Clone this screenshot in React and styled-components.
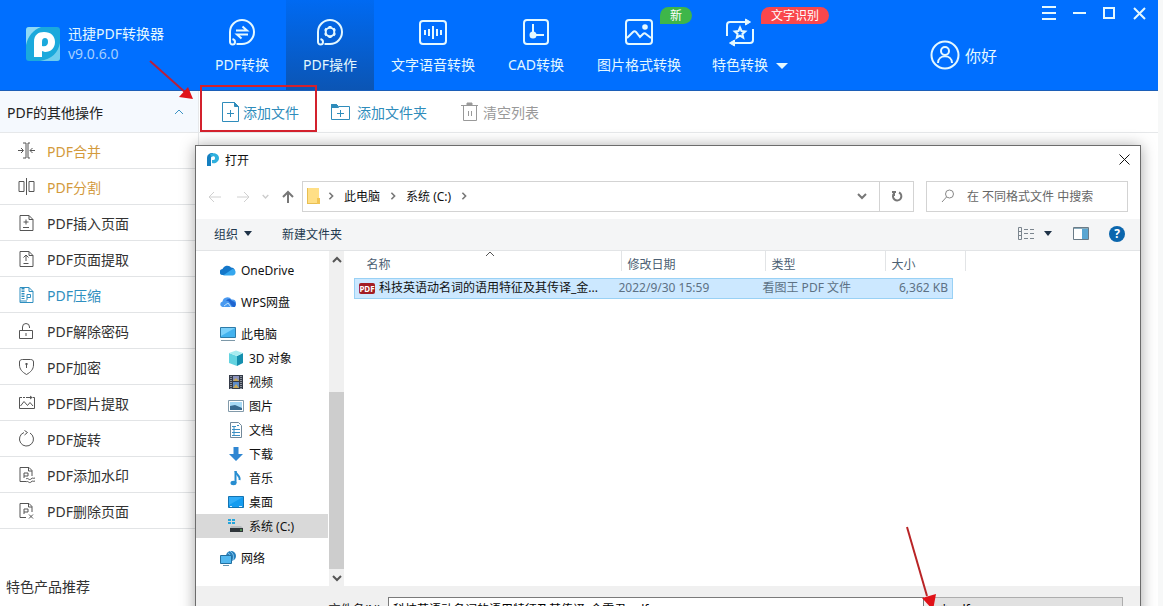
import React, {useState} from 'react';
import styled, {createGlobalStyle} from 'styled-components';

const Tabs = [
    {name: 'PDF转换', icon: 'convert'},
    {name: 'PDF操作', icon: 'operate'},
    {name: '文字语音转换', icon: 'voice', wide: true},
    {name: 'CAD转换', icon: 'cad'},
    {name: '图片格式转换', icon: 'image', wide: true, badge: '新', badgeColor: '#3eb649'},
    {name: '特色转换', icon: 'star', more: true, badge: '文字识别', badgeColor: '#f9474c'},
];

const Menus = [
    {name: 'PDF合并', icon: 'merge', color: '#d39a3c'},
    {name: 'PDF分割', icon: 'split', color: '#d39a3c'},
    {name: 'PDF插入页面', icon: 'insert'},
    {name: 'PDF页面提取', icon: 'extract'},
    {name: 'PDF压缩', icon: 'zip', color: '#2f8fc0'},
    {name: 'PDF解除密码', icon: 'unlock'},
    {name: 'PDF加密', icon: 'shield'},
    {name: 'PDF图片提取', icon: 'picture'},
    {name: 'PDF旋转', icon: 'rotate'},
    {name: 'PDF添加水印', icon: 'watermark'},
    {name: 'PDF删除页面', icon: 'remove'},
];

const Tree = [
    {name: 'OneDrive', icon: 'onedrive', top: true},
    {name: 'WPS网盘', icon: 'wps', top: true},
    {name: '此电脑', icon: 'computer', top: true},
    {name: '3D 对象', icon: 'cube'},
    {name: '视频', icon: 'video'},
    {name: '图片', icon: 'photo'},
    {name: '文档', icon: 'doc'},
    {name: '下载', icon: 'download'},
    {name: '音乐', icon: 'music'},
    {name: '桌面', icon: 'desktop'},
    {name: '系统 (C:)', icon: 'drive'},
    {name: '网络', icon: 'network', top: true},
];

const Bubble = <>
    <path d="M2 24V14A12 12 0 1 1 14 26H8.500"/>
    <path d="M2 14v10a2.500 2.500 0 1 0 5 0c0-1.500-1-2.500-2.500-3"/>
</>;

const tabIcons = {
    convert: <>
        {Bubble}
        <path d="M8 12.500h11l-4.500-4M20 16.500H9l4.500 4"/>
    </>,
    operate: <>
        {Bubble}
        <circle cx="14" cy="14" r="4.300"/>
        <path strokeWidth="3" d="M14 8v2M14 18v2M8.800 11l1.700 1M17.500 16l1.700 1M19.200 11l-1.700 1M10.500 16l-1.700 1"/>
    </>,
    voice: <>
        <rect x="1" y="3" width="26" height="23" rx="3"/>
        <path d="M6 12v5M10 11v7M14 8v13M18 11v7M22 12v5"/>
    </>,
    cad: <>
        <rect x="2" y="2" width="24" height="24" rx="3"/>
        <path d="M11 6v12M8 17h14"/>
        <circle cx="11" cy="17" r="2.500" fill="currentColor"/>
    </>,
    image: <>
        <rect x="1" y="2" width="26" height="24" rx="3"/>
        <circle cx="20" cy="9" r="1.800" fill="currentColor"/>
        <path d="M2 20l6-6c1-1 2-1 3 0l4 5 3-3c1-1 2-1 3 0l5 4"/>
    </>,
    star: <>
        <path d="M1 18V7a3 3 0 0 1 3-3h17M27 11v11a3 3 0 0 1-3 3H7"/>
        <path d="M19.500 1l5 3-5 3zM8.500 22l-5 3 5 3z" fill="currentColor" strokeWidth="1"/>
        <path d="M14 9.500l1.500 3.500 3.700.4-2.800 2.500.8 3.700-3.200-2-3.200 2 .8-3.700-2.800-2.500 3.700-.4z"/>
    </>,
};

const Page = <path d="M2 1.500h9l4 4v11H2zM11 1.500v4h4"/>;

const menuIcons = {
    merge: <path d="M5 1h3v15H5M12 1h-2M12 16h-2M10 1v15M0 8.500h5M3 6l2.500 2.500L3 11M17 8.500h-5M14.500 6L12 8.500l2.500 2.500"/>,
    split: <path d="M1 3.500h5v10H1zM11 3.500h5v10h-5zM8.500 0v17"/>,
    insert: <>{Page}<path d="M8 5.500v5M5.500 8h5M5 13.500h6"/></>,
    extract: <>{Page}<path d="M8 11V5M5.500 7.500L8 5l2.500 2.500M5.500 13.500h5"/></>,
    zip: <>{Page}<path d="M5 2v11" strokeWidth="3" strokeDasharray="1.500 1"/><path d="M9 14V8.500h3.500v3H9M2 15h7"/></>,
    unlock: <path d="M1.500 8.500h13v8h-13zM4.500 8.500V5a3.500 3.500 0 0 1 7 0v1M8 11v3"/>,
    shield: <><path d="M8.500 16.500C4 14 1.500 11 1.500 7V4c0-1.500 1-2.500 3-2.500h8c2 0 3 1 3 2.500v3c0 4-2.500 7-7 9.500z"/><path strokeWidth="2" d="M8.500 5v2"/><path d="M8.500 6v4"/></>,
    picture: <path d="M4 3.500H1.500v11h15v-11h-2M5 3.500h2M8 3.500h6M12 2l2 1.500L12 5M2.500 12L6 7.500l3.500 4L12 8.500l3 3.500"/>,
    rotate: <path d="M6 2.500a7 7 0 1 0 6 .5M6.500.5l3 2-3 2.500"/>,
    watermark: <path d="M8 15.500H2V1.500h9l3 3V10M10.500 1.500V5H14M6 12V7h4v3H6M8 13c2-2 3 2 5 0s2 0 4-1M8 16c2-2 3 2 5 0s2 0 4-1"/>,
    remove: <path d="M8 15.500H2V1.500h9l3 3V10M10.500 1.500V5H14M6 12V7h4v3H6M11 12.500l4 4M15 12.500l-4 4"/>,
};

const treeIcons = {
    onedrive: <>
        <path d="M3 13a3 3 0 0 1-.5-6A5 5 0 0 1 11 5.500 4 4 0 0 1 13 13z" fill="#1477c9"/>
        <path d="M3 13.500L12.500 7a3.300 3.300 0 0 1 .5 6.500z" fill="#35a7ee"/>
    </>,
    wps: <>
        <path d="M2.500 13a2.800 2.800 0 0 1 0-5.500A5 5 0 0 1 11.500 5.500 3.500 3.500 0 0 1 13 13z" fill="#4a9af0"/>
        <path d="M6 7c4-1 4 4 7 6h2c2-4-1-6-3-6-2-3-5-2-6 0z" fill="#1f64cf"/>
        <path d="M4 12l4-3 3 4" stroke="#bfe2ff" fill="none"/>
    </>,
    computer: <>
        <path d="M.5 1.500h15v10H.5z" fill="#43b2ee" stroke="#2e7ba8"/>
        <path d="M1 2h14L1 10z" fill="#7bd0fa"/>
        <path d="M1 14.500h14" stroke="#7d98a8"/>
    </>,
    cube: <>
        <path d="M1 3l8 3v10l-8-3z" fill="#62d3e0"/>
        <path d="M9 6l6-3v10l-6 3z" fill="#158fae"/>
        <path d="M1 3l7-2.500L15 3 9 6z" fill="#a8ecf0"/>
    </>,
    video: <>
        <path d="M1 1h14v14H1z" fill="#353b48"/>
        <path d="M3 2v13M13 2v13" stroke="#e7eef4" strokeDasharray="1 1"/>
        <path d="M5 2h6v5H5z" fill="#8b93bd"/><path d="M5 8h6v6H5z" fill="#5e8cc9"/>
        <path d="M5 14l3-4 3 4M5 7l3-3 3 3" fill="#c9aa57"/>
    </>,
    photo: <>
        <path d="M.5 2.500h15v11H.5z" fill="#fff" stroke="#829aaa"/>
        <path d="M2 4h12v8H2z" fill="#a6d9f5"/><path d="M2 8l5-1 7 3v2H2z" fill="#376a90"/>
    </>,
    doc: <>
        <path d="M2.500.5h8l3 3v12h-11z" fill="#fff" stroke="#71889a"/>
        <path d="M4 4.500h4M4 7.500h8M4 10.500h8M4 13.500h8M9 3.500h2M6 5v8" stroke="#3b8fc4"/>
    </>,
    download: <path d="M5.500 1h5v7H15l-7 7-7-7h4.500z" fill="#2f86d2"/>,
    music: <><path d="M7.500 1c0 4 5 4 4 9" fill="none" stroke="#278dd0" strokeWidth="2"/><path d="M7.500 1v12" stroke="#278dd0" strokeWidth="2"/><ellipse cx="5.500" cy="13" rx="3" ry="2.200" fill="#278dd0"/></>,
    desktop: <><path d="M.5 2.500h15v11H.5z" fill="#149cf0" stroke="#1473b1"/><path d="M1 3h14L1 11z" fill="#31adf8"/><path d="M2 12.500h2M11 12.500h3" stroke="#d8efff"/></>,
    drive: <>
        <path d="M0 1h3v2H0zM4 1h3v2H4zM0 4h3v2H0zM4 4h3v2H4z" fill="#23a5dd"/>
        <path d="M3 8h10l2 2H2z" fill="#b7bcc0"/><path d="M2 10h13v4H2z" fill="#30363b"/><path d="M12 12h2" stroke="#73e16f"/>
    </>,
    network: <>
        <circle cx="11" cy="6" r="5" fill="#2680bd"/><path d="M8 3c3 2 4 4 3 8M10 1c4 3 4 6 3 9" stroke="#92cdf0" fill="none"/>
        <path d="M.5 5.500h11v8H.5z" fill="#52b8f0" stroke="#2470a0"/><path d="M3 15.500h6" stroke="#6795b0"/>
    </>,
};

const Chevron = ({dir, size = 10, color = '#555', width = 2}) => {
    const d = {
        up: 'M1 7l4-4 4 4',
        down: 'M1 3l4 4 4-4',
        right: 'M3 1l4 4-4 4',
    };
    return <Glyph width={size} height={size} viewBox="0 0 10 10" stroke={color} strokeWidth={width}><path d={d[dir]}/></Glyph>
};

const TileLogo = () => (
    <Glyph width="34" height="34" viewBox="0 0 34 34" strokeWidth="0">
        <rect width="34" height="34" rx="3" fill="#1ba9dc"/>
        <path d="M0 3a3 3 0 0 1 3-3h12C7 3 2 9 0 18z" fill="#8fd9f5"/>
        <path d="M34 16v15a3 3 0 0 1-3 3H14c12-2 18-8 20-18z" fill="#70cdee"/>
        <path fillRule="evenodd" d="M8 15C8 8 12 5 18 5c7 0 11 4 11 10s-4 10-10 10l-3-1v6H8zM16 19c4 1 6-1 6-4s-1-4-3-4-3 1-3 4z" fill="#fff"/>
    </Glyph>
);

const SmallLogo = () => (
    <Glyph width="12" height="14" viewBox="0 0 12 14" strokeWidth="0">
        <path d="M0 5c0-3 2-5 6-5v3C4 3 4 4 4 6v7H0z" fill="#157fc0"/>
        <path d="M3 1c4-2 9 0 9 4s-4 6-7 5V7c2 0 3 0 3-2S6 3 4 4z" fill="#2fb0de"/>
    </Glyph>
);

export const PdfConverter = () => {
    const [tab, setTab] = useState(1);
    const [folder, setFolder] = useState(10);
    const [fileName, setFileName] = useState('科技英语动名词的语用特征及其传译_金雯君.pdf');

    return <>
        <GlobalStyle/>
        <Screen>
            <AppWindow>
                <Header>
                    <Brand>
                        <TileLogo/>
                        <div>
                            <BrandName>迅捷PDF转换器</BrandName>
                            <Version>v9.0.6.0</Version>
                        </div>
                    </Brand>
                    <Nav>
                        {Tabs.map((item, idx) => (
                            <Tab key={item.name} $active={tab === idx} $wide={item.wide} onClick={() => setTab(idx)}>
                                <Glyph width="30" height="30" viewBox="-1 -1 30 30" strokeWidth="2">{tabIcons[item.icon]}</Glyph>
                                <span>{item.name}</span>
                                {item.more && <MoreArrow/>}
                                {item.badge && <Badge $color={item.badgeColor}>{item.badge}</Badge>}
                            </Tab>
                        ))}
                    </Nav>
                    <User>
                        <Glyph width="30" height="30" viewBox="0 0 30 30" strokeWidth="2">
                            <circle cx="15" cy="15" r="13.500"/>
                            <circle cx="15" cy="11" r="4"/>
                            <path d="M8 23c0-9 14-9 14 0"/>
                        </Glyph>
                        你好
                    </User>
                    <Controls>
                        <button aria-label="菜单"><Glyph width="14" height="14" viewBox="0 0 14 14" strokeWidth="2"><path d="M0 1h14M0 7h14M0 13h14"/></Glyph></button>
                        <button aria-label="最小化"><Glyph width="14" height="14" viewBox="0 0 14 14" strokeWidth="2"><path d="M1 7h13"/></Glyph></button>
                        <button aria-label="最大化"><Glyph width="14" height="14" viewBox="0 0 14 14" strokeWidth="2"><path d="M2 2h10v10H2z"/></Glyph></button>
                        <button aria-label="关闭"><Glyph width="14" height="14" viewBox="0 0 14 14" strokeWidth="2"><path d="M2 2l11 11M13 2L2 13"/></Glyph></button>
                    </Controls>
                </Header>
                <Main>
                    <Sidebar>
                        <SideTitle>PDF的其他操作<Chevron dir="up" color="#3c93c4" width={1}/></SideTitle>
                        {Menus.map(item => (
                            <MenuItem key={item.name} $color={item.color}>
                                <MenuIcon width="18" height="18" viewBox="0 0 18 18" $blue={item.icon === 'zip'}>{menuIcons[item.icon]}</MenuIcon>
                                {item.name}
                            </MenuItem>
                        ))}
                        <SideFoot>特色产品推荐</SideFoot>
                    </Sidebar>
                    <Work>
                        <ToolBar>
                            <Tool>
                                <Glyph width="18" height="22" viewBox="0 0 18 22" strokeWidth="1">
                                    <path d="M.5 1.500h12l4 4v15H.5zM5 12.500h7M8.500 9v7"/><path d="M12.500 1.500v4h4z" fill="currentColor"/>
                                </Glyph>
                                添加文件
                            </Tool>
                            <Tool $left={32} $gap={7}>
                                <Glyph width="19" height="18" viewBox="0 0 19 18" strokeWidth="1">
                                    <path d="M.5 1.500h5l2 2h11v13H.5zM6 10.500h7M9.500 7v7"/><path d="M.5 1.500h5l2 3h-7z" fill="currentColor"/>
                                </Glyph>
                                添加文件夹
                            </Tool>
                            <Tool $left={34} $gap={5} $gray>
                                <Glyph width="17" height="20" viewBox="0 0 17 20" strokeWidth="1">
                                    <path d="M0 3.500h17M2.500 4v14.500h13V4M7.500 9v5M10.500 9v5"/><path d="M6 1h5v2H6z" fill="currentColor"/>
                                </Glyph>
                                清空列表
                            </Tool>
                        </ToolBar>
                    </Work>
                </Main>
            </AppWindow>

            <Dialog role="dialog" aria-label="打开">
                <TitleBar>
                    <SmallLogo/>
                    <span>打开</span>
                    <CloseBtn aria-label="关闭对话框"><Glyph width="11" height="11" viewBox="0 0 11 11" strokeWidth="1"><path d="M.5.5l10 10M10.500.5l-10 10"/></Glyph></CloseBtn>
                </TitleBar>
                <PathRow>
                    <Arrows>
                        <button aria-label="后退"><Glyph width="14" height="14" viewBox="0 0 14 14" stroke="#d0d0d0" strokeWidth="1"><path d="M13 7H1M6 2L1 7l5 5"/></Glyph></button>
                        <button aria-label="前进"><Glyph width="14" height="14" viewBox="0 0 14 14" stroke="#d0d0d0" strokeWidth="1"><path d="M1 7h12M8 2l5 5-5 5"/></Glyph></button>
                        <button aria-label="最近位置"><Chevron dir="down" size={7} color="#ccc"/></button>
                        <button aria-label="上移"><Glyph width="14" height="14" viewBox="0 0 14 14" stroke="#777" strokeWidth="2"><path d="M7 13V2M2 7l5-5 5 5"/></Glyph></button>
                    </Arrows>
                    <Address>
                        <Glyph width="14" height="16" viewBox="0 0 14 16" strokeWidth="0">
                            <path d="M0 0h12v16H0z" fill="#ffdf86"/><path d="M0 0h1v16H0zM0 15h12v1H0z" fill="#e8bf52"/><path d="M10 10h3v6h-3z" fill="#f2c555"/>
                        </Glyph>
                        <Chevron dir="right" size={8} color="#777"/>
                        <button>此电脑</button>
                        <Chevron dir="right" size={8} color="#777"/>
                        <button>系统 (C:)</button>
                        <Chevron dir="right" size={8} color="#777"/>
                        <DropBtn aria-label="历史记录"><Chevron dir="down" color="#777"/></DropBtn>
                        <RefreshBtn aria-label="刷新">
                            <Glyph width="12" height="12" viewBox="0 0 12 12" stroke="#777" strokeWidth="2"><path d="M8 2.500A4.200 4.200 0 1 1 3 3.500M3 6V2M1 2h4"/></Glyph>
                        </RefreshBtn>
                    </Address>
                    <Search>
                        <Glyph width="14" height="14" viewBox="0 0 14 14" stroke="#888" strokeWidth="1"><circle cx="8.500" cy="5" r="4"/><path d="M5.500 8L1 13"/></Glyph>
                        <input type="text" aria-label="搜索" placeholder="在 不同格式文件 中搜索"/>
                    </Search>
                </PathRow>
                <Commands>
                    <button>组织<Caret/></button>
                    <button>新建文件夹</button>
                    <ViewBtns>
                        <button aria-label="更改视图">
                            <Glyph width="17" height="14" viewBox="0 0 17 14" stroke="#7b858e" strokeWidth="1"><path d="M.5.5h3v12h-3zM.5 4.500h3M.5 8.500h3M6 2.500h4M12 2.500h4M6 6.500h4M12 6.500h4M6 11.500h4M12 11.500h4"/></Glyph>
                            <Caret/>
                        </button>
                        <button aria-label="预览窗格">
                            <Glyph width="16" height="13" viewBox="0 0 16 13" strokeWidth="1"><path d="M.5.5h15v12H.5z" fill="#fff" stroke="#6a7b87"/><path d="M9 1h6v11H9z" fill="#5aa6d2" stroke="none"/><path d="M1 1.500h14" stroke="#8ab"/></Glyph>
                        </button>
                        <HelpBtn aria-label="帮助">?</HelpBtn>
                    </ViewBtns>
                </Commands>
                <Body>
                    <TreePane>
                        {Tree.map((item, idx) => (
                            <TreeItem key={item.name} $top={item.top} $selected={folder === idx} onClick={() => setFolder(idx)}>
                                <Glyph width="16" height="16" viewBox="0 0 16 16" stroke="none">{treeIcons[item.icon]}</Glyph>
                                {item.name}
                            </TreeItem>
                        ))}
                    </TreePane>
                    <ScrollBar>
                        <Chevron dir="up"/>
                        <Thumb/>
                        <Chevron dir="down"/>
                    </ScrollBar>
                    <Files>
                        <SortMark><Chevron dir="up" width={1}/></SortMark>
                        <FileTable>
                            <colgroup><col width="262"/><col width="144"/><col width="120"/><col width="72"/><col width="13"/></colgroup>
                            <thead>
                                <tr>
                                    <th>名称</th>
                                    <th>修改日期</th>
                                    <th>类型</th>
                                    <th>大小</th>
                                    <th aria-label="空列"/>
                                </tr>
                            </thead>
                            <tbody>
                                <tr>
                                    <NameCell>
                                        <div>
                                            <PdfTag>PDF</PdfTag>
                                            科技英语动名词的语用特征及其传译_金...
                                        </div>
                                    </NameCell>
                                    <td>2022/9/30 15:59</td>
                                    <td>看图王 PDF 文件</td>
                                    <SizeCell>6,362 KB</SizeCell>
                                </tr>
                            </tbody>
                        </FileTable>
                    </Files>
                </Body>
                <Footer>
                    <label htmlFor="fileName">文件名(N):</label>
                    <input id="fileName" type="text" value={fileName} onChange={e => setFileName(e.target.value)}/>
                    <select aria-label="文件类型">
                        <option>*.pdf</option>
                    </select>
                </Footer>
            </Dialog>

            <Highlight/>
            <FirstArrow width="48" height="44" viewBox="0 0 48 44">
                <path d="M1 1l36 32" stroke="#b81f3c" strokeWidth="2"/>
                <path d="M44 39l-14-2 9-10z" fill="#e01218"/>
            </FirstArrow>
            <SecondArrow width="36" height="84" viewBox="0 0 36 84">
                <path d="M2 1l20 69" stroke="#b92426" strokeWidth="2"/>
                <path d="M28 84L17 72l14-4z" fill="#e01218"/>
            </SecondArrow>
        </Screen>
    </>
}

export default PdfConverter;

const GlobalStyle = createGlobalStyle`
    *{
        box-sizing: border-box;
    }
    body{
        margin: 0;
        font-family: "Noto Sans", "Noto Sans CJK SC", sans-serif;
        font-size: 14px;
        color: #222;
    }
    button{
        border: none;
        background: none;
        padding: 0;
        font: inherit;
        color: inherit;
        white-space: nowrap;
    }
`

const Glyph = styled.svg.attrs(props => ({
    fill: 'none',
    stroke: props.stroke || 'currentColor',
    'aria-hidden': true,
}))`
    flex: none;
    display: block;
`

const Screen = styled.div`
    position: relative;
    height: 100vh;
    overflow: hidden;
    background: #f7f8f8;
`

const AppWindow = styled.div`
    display: flex;
    flex-direction: column;
    height: 100%;
    margin-right: 5px;
    background: #fff;
`

const Header = styled.header`
    display: flex;
    height: 91px;
    background: #006fff;
    border-bottom: 1px solid #1c5fb8;
    color: #e4f8ff;
`

const Brand = styled.div`
    display: flex;
    align-items: flex-start;
    gap: 8px;
    width: 198px;
    padding: 27px 0 0 26px;
`

const BrandName = styled.div`
    line-height: 20px;
    margin-top: -3px;
`

const Version = styled.div`
    line-height: 20px;
    color: #a5d0ff;
`

const Nav = styled.nav`
    display: flex;
`

const Tab = styled.button`
    position: relative;
    display: flex;
    flex-direction: column;
    align-items: center;
    gap: 8px;
    width: ${props => props.$wide ? 118 : 88}px;
    padding-top: 17px;
    line-height: 20px;
    background: ${props => props.$active ? 'linear-gradient(#006af2, #0b55b4)' : 'none'};

    &:last-child{
        width: 84px;
    }
`

const MoreArrow = styled.i`
    position: absolute;
    left: 78px;
    top: 63px;
    border: 6px solid transparent;
    border-top-color: currentColor;
    border-bottom: none;
`

const Badge = styled.span`
    position: absolute;
    left: ${props => props.children.length > 1 ? 63 : 80}px;
    top: 7px;
    padding: 0 10px;
    border-radius: 9px 9px 9px 0;
    font-size: 12px;
    line-height: 17px;
    color: #fff;
    background: ${props => props.$color};
`

const User = styled.div`
    display: flex;
    align-items: center;
    gap: 5px;
    height: 28px;
    margin: 41px 45px 0 auto;
    font-size: 16px;
`

const Controls = styled.div`
    display: flex;
    align-items: flex-start;
    gap: 16px;
    padding: 6px 12px 0 0;
`

const Main = styled.div`
    display: flex;
    flex: 1;
`

const Sidebar = styled.aside`
    display: flex;
    flex-direction: column;
    width: 199px;
    border-right: 1px solid #e6e8ea;
`

const SideTitle = styled.h2`
    display: flex;
    align-items: center;
    justify-content: space-between;
    height: 42px;
    margin: 0;
    padding: 0 14px 0 7px;
    border-bottom: 1px solid #e6e8ea;
    font-size: 14px;
    font-weight: 400;
    background: #f5f9fe;
`

const MenuItem = styled.button`
    display: flex;
    align-items: center;
    gap: 11px;
    height: 36px;
    padding-left: 18px;
    border-bottom: 1px solid #e2e4e6;
    color: ${props => props.$color || '#333'};
`

const MenuIcon = styled.svg`
    fill: none;
    stroke: ${props => props.$blue ? '#2f8fc0' : '#555'};
    stroke-width: 1;
`

const SideFoot = styled.div`
    margin-top: 48px;
    padding-left: 6px;
    line-height: 20px;
    color: #333;
`

const Work = styled.main`
    flex: 1;
`

const ToolBar = styled.div`
    display: flex;
    align-items: center;
    height: 42px;
    padding-left: 23px;
    border-bottom: 1px solid #e6e8ea;
`

const Tool = styled.button`
    display: flex;
    align-items: center;
    gap: ${props => props.$gap || 3}px;
    margin-left: ${props => props.$left || 0}px;
    color: ${props => props.$gray ? '#999' : '#2f8cbb'};
`

const Dialog = styled.section`
    position: absolute;
    top: 145px;
    left: 195px;
    right: 22px;
    border: 1px solid #6c6c6c;
    font-size: 12px;
    color: #111;
    background: #fff;
    box-shadow: 0 1px 14px rgba(0, 0, 0, 0.35);
`

const TitleBar = styled.div`
    display: flex;
    align-items: center;
    gap: 6px;
    height: 29px;
    padding: 0 10px 2px 11px;
`

const CloseBtn = styled.button`
    margin-left: auto;
`

const PathRow = styled.div`
    display: flex;
    align-items: center;
    height: 44px;
    padding: 0 12px 1px;
`

const Arrows = styled.div`
    display: flex;
    align-items: center;
    gap: 12px;
    width: 94px;

    button:nth-child(2){
        margin-left: 2px;
    }
`

const Address = styled.div`
    display: flex;
    align-items: center;
    flex: 1;
    gap: 9px;
    height: 31px;
    padding: 0 0 1px 4px;
    border: 1px solid #d3d3d3;

    svg:first-child{
        margin-right: -3px;
    }
    button svg:first-child{
        margin: 0;
    }
`

const DropBtn = styled.button`
    margin: 0 3px 0 auto;
`

const RefreshBtn = styled.button`
    display: flex;
    align-items: center;
    justify-content: center;
    width: 34px;
    height: 29px;
    border-left: 1px solid #d3d3d3;
`

const Search = styled.div`
    display: flex;
    align-items: center;
    gap: 12px;
    width: 202px;
    height: 31px;
    margin-left: 12px;
    padding: 0 0 1px 14px;
    border: 1px solid #d3d3d3;

    input{
        flex: 1;
        min-width: 0;
        border: none;
        padding: 0;
        font: inherit;
    }
    input::placeholder{
        color: #666;
        opacity: 1;
    }
`

const Commands = styled.div`
    display: flex;
    align-items: center;
    gap: 30px;
    height: 32px;
    padding: 0 15px 2px 18px;
    border-bottom: 1px solid #e2e4e6;
    color: #22394f;
    background: #f4f5f6;

    button{
        display: flex;
        align-items: center;
        gap: 6px;
    }
`

const Caret = styled.i`
    border: 4px solid transparent;
    border-top: 5px solid #1f3348;
    border-bottom: none;
`

const ViewBtns = styled.div`
    display: flex;
    align-items: center;
    gap: 21px;
    margin-left: auto;

    button:first-child{
        gap: 9px;
    }
`

const HelpBtn = styled.button`
    justify-content: center;
    width: 16px;
    height: 16px;
    margin-left: -1px;
    border-radius: 50%;
    font-weight: 700;
    line-height: 16px;
    color: #fff;
    background: #0b66ad;
`

const Body = styled.div`
    display: flex;
    height: 335px;
`

const TreePane = styled.div`
    display: flex;
    flex-direction: column;
    width: 133px;
    padding: 7px 1px 0 0;
`

const TreeItem = styled.button`
    display: flex;
    align-items: center;
    gap: 5px;
    height: 24px;
    padding-left: ${props => props.$top ? 24 : 32}px;
    background: ${props => props.$selected ? '#d9d9d9' : 'none'};

    &:nth-child(2), &:nth-child(3), &:last-child{
        margin-top: 8px;
    }
`

const ScrollBar = styled.div`
    display: flex;
    flex-direction: column;
    align-items: center;
    width: 15px;
    padding: 4px 0 3px;
    background: #f0f0f0;
`

const Thumb = styled.div`
    width: 100%;
    height: 177px;
    margin: auto 0 4px;
    background: #cdcdcd;
`

const Files = styled.div`
    position: relative;
    flex: 1;
    padding-left: 10px;
`

const SortMark = styled.div`
    position: absolute;
    left: 141px;
    top: -2px;
`

const FileTable = styled.table`
    table-layout: fixed;
    width: 611px;
    border-collapse: collapse;

    th{
        height: 27px;
        padding: 0 0 0 11px;
        font-weight: 400;
        text-align: left;
        color: #4c5f73;
        background: linear-gradient(#e2e4e6, #e2e4e6) 4px 0 / 1px 20px no-repeat;
    }
    th:first-child{
        padding-left: 12px;
        background: none;
    }
    th:last-child{
        background-position: 12px 0;
    }
    td{
        height: 20px;
        padding: 0 0 0 2px;
        border: solid #99d1f5;
        border-width: 1px 0;
        white-space: nowrap;
        line-height: 18px;
        color: #5d7184;
        background: #cce8ff;
    }
`

const NameCell = styled.td`
    && {
        padding-left: 4px;
        border-left-width: 1px;
    }

    div{
        display: flex;
        align-items: center;
        gap: 4px;
        color: #111;
    }
`

const PdfTag = styled.span`
    width: 16px;
    height: 11px;
    border-radius: 2px;
    font-size: 8px;
    font-weight: 700;
    line-height: 11px;
    text-align: center;
    color: #fff;
    background: #a31d24;
`

const SizeCell = styled.td`
    && {
        padding-right: 4px;
        border-right-width: 1px;
        text-align: right;
    }
`

const Footer = styled.div`
    display: flex;
    align-items: center;
    height: 70px;
    padding: 0 17px 24px 0;
    background: #f0f0f0;

    label{
        width: 192px;
        padding-right: 4px;
        text-align: right;
    }
    input{
        flex: 1;
        height: 24px;
        padding: 0 4px;
        border: 1px solid #7a7a7a;
        font: inherit;
    }
    select{
        width: 193px;
        height: 24px;
        margin-left: 6px;
        padding: 0 6px;
        border: 1px solid #adadad;
        font: inherit;
        background: #e1e1e1;
    }
`

const Highlight = styled.div`
    position: absolute;
    left: 200px;
    top: 85px;
    width: 117px;
    height: 47px;
    border: 2px solid #d3212d;
    pointer-events: none;
`

const FirstArrow = styled.svg`
    position: absolute;
    left: 149px;
    top: 60px;
    pointer-events: none;
`

const SecondArrow = styled.svg`
    position: absolute;
    left: 905px;
    top: 526px;
    pointer-events: none;
`
